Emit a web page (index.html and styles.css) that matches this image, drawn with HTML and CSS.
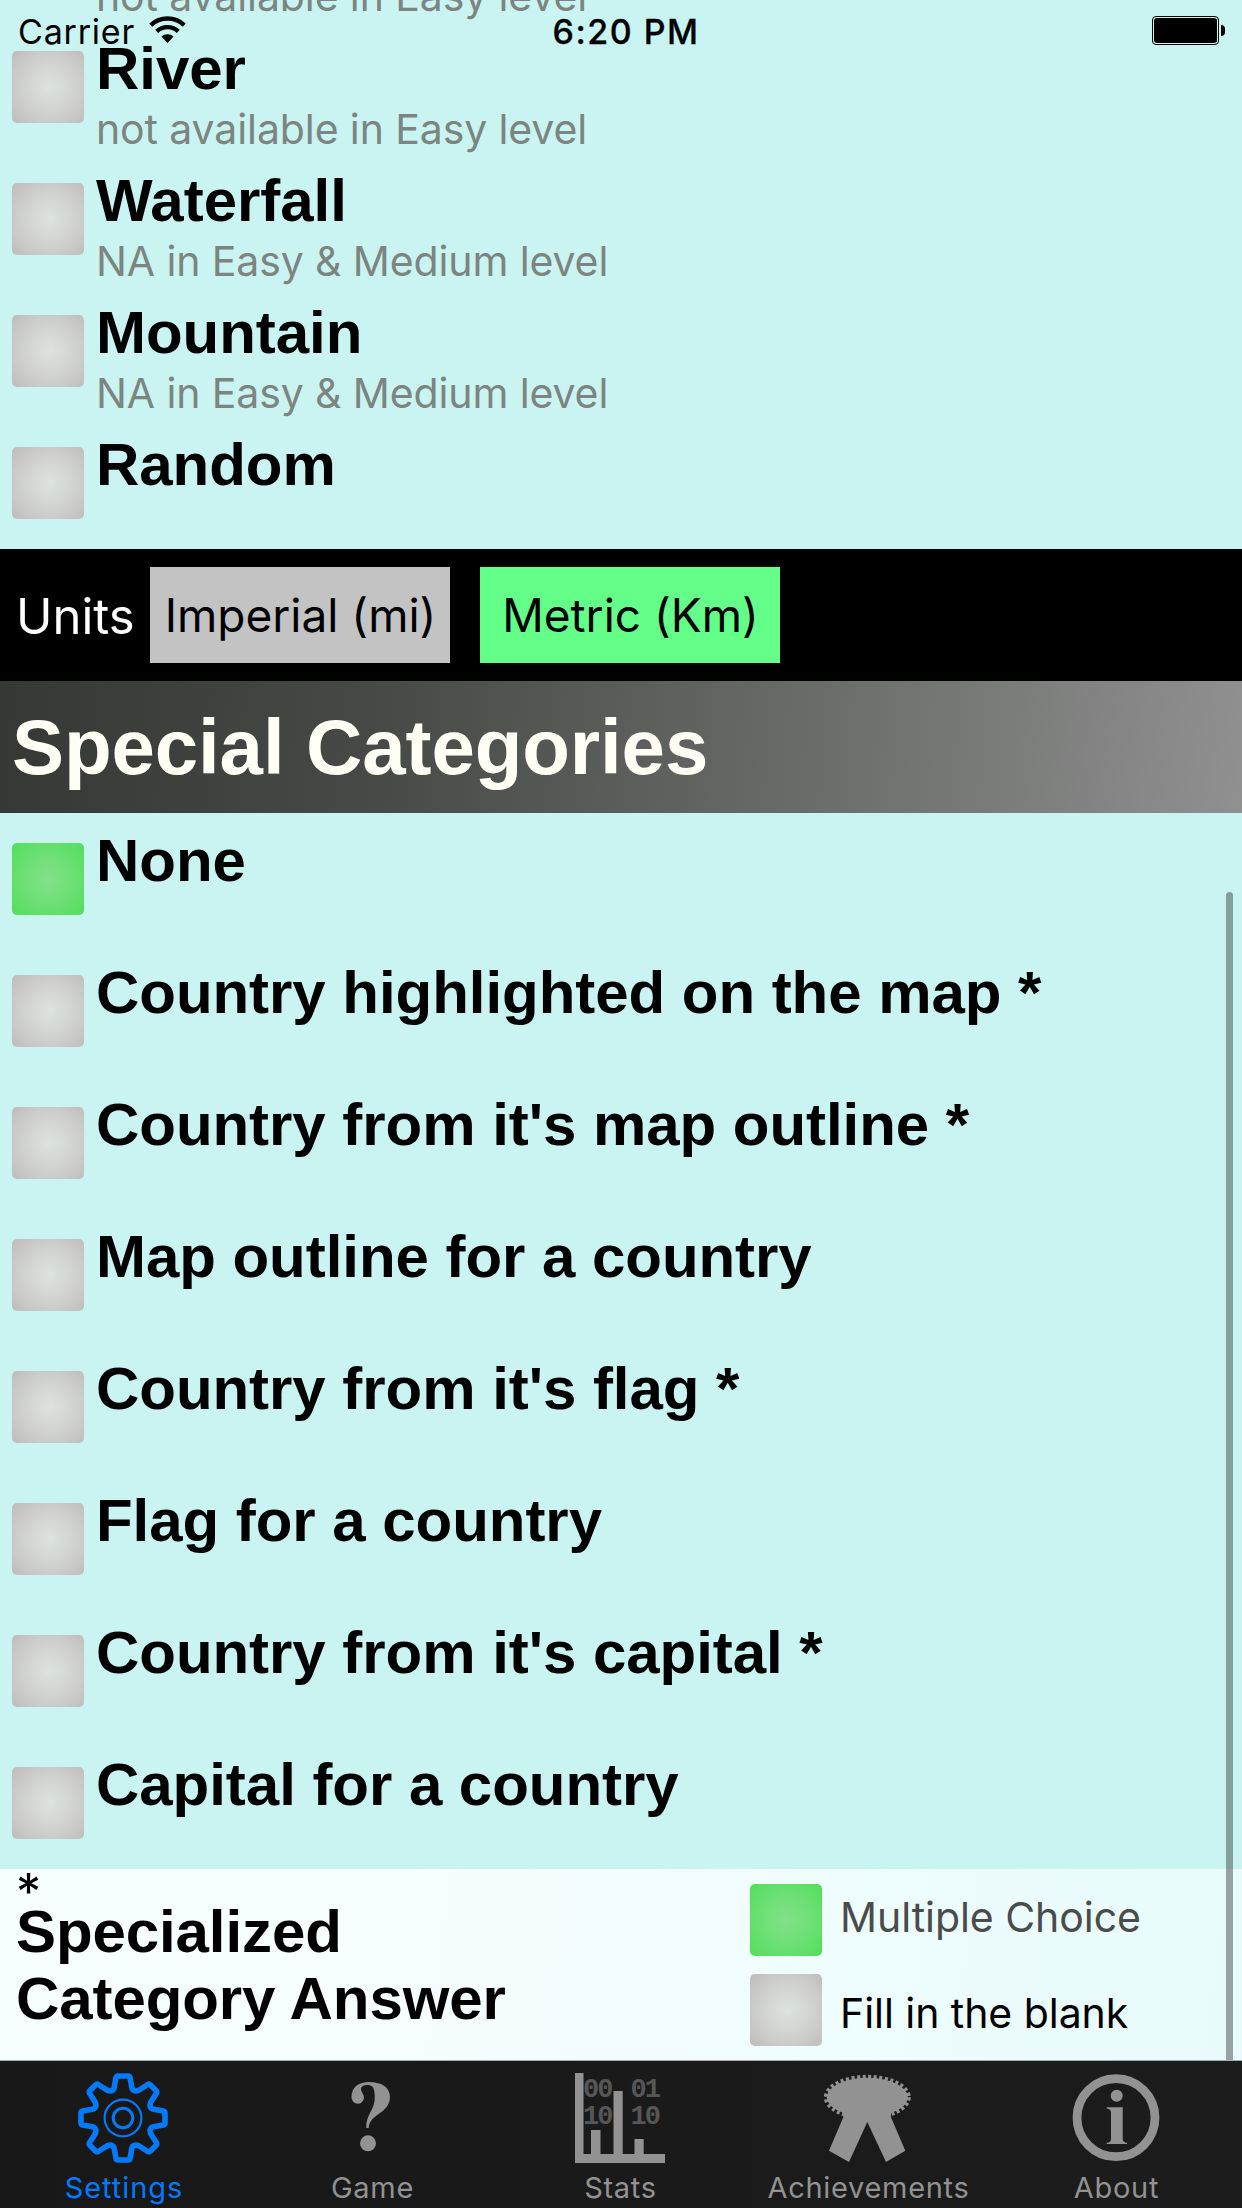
FILE: index.html
```html
<!DOCTYPE html>
<html lang="en">
<head>
<meta charset="utf-8">
<title>Settings</title>
<link rel="stylesheet" href="styles.css">
</head>
<body>
<div class="screen">
  <header class="status">
    <div class="status-left">
      <span>Carrier</span>
      <svg class="wifi" viewBox="0 0 37 27" width="37" height="27">
        <path d="M1.8 9.1A24.5 24.5 0 0 1 35.2 9.1M7.7 15.4A15.8 15.8 0 0 1 29.3 15.4" fill="none" stroke="#000" stroke-width="4.4"/>
        <path d="M18.5 27L12.4 20.6A9 9 0 0 1 24.6 20.6Z"/>
      </svg>
    </div>
    <span class="time">6:20 PM</span>
    <div class="battery"><div class="battery-body"><div class="battery-fill"></div></div><div class="battery-cap"></div></div>
  </header>

  <main class="content">
    <div class="row"><span class="box"></span><div class="text"><span class="title"></span><span class="sub">not available in Easy level</span></div></div>
    <div class="row"><span class="box"></span><div class="text"><span class="title">River</span><span class="sub">not available in Easy level</span></div></div>
    <div class="row"><span class="box"></span><div class="text"><span class="title">Waterfall</span><span class="sub">NA in Easy &amp; Medium level</span></div></div>
    <div class="row"><span class="box"></span><div class="text"><span class="title">Mountain</span><span class="sub">NA in Easy &amp; Medium level</span></div></div>
    <div class="row"><span class="box"></span><div class="text"><span class="title">Random</span></div></div>

    <div class="units">
      <span class="units-label">Units</span>
      <span class="unit">Imperial (mi)</span>
      <span class="unit unit-on">Metric (Km)</span>
    </div>

    <h2 class="section">Special Categories</h2>

    <div class="row"><span class="box box-on"></span><div class="text"><span class="title">None</span></div></div>
    <div class="row"><span class="box"></span><div class="text"><span class="title">Country highlighted on the map *</span></div></div>
    <div class="row"><span class="box"></span><div class="text"><span class="title">Country from it's map outline *</span></div></div>
    <div class="row"><span class="box"></span><div class="text"><span class="title">Map outline for a country</span></div></div>
    <div class="row"><span class="box"></span><div class="text"><span class="title">Country from it's flag *</span></div></div>
    <div class="row"><span class="box"></span><div class="text"><span class="title">Flag for a country</span></div></div>
    <div class="row"><span class="box"></span><div class="text"><span class="title">Country from it's capital *</span></div></div>
    <div class="row"><span class="box"></span><div class="text"><span class="title">Capital for a country</span></div></div>

    <div class="answer">
      <div class="answer-label">
        <span class="star">*</span>
        <span class="answer-title">Specialized<br>Category Answer</span>
      </div>
      <div class="options">
        <div class="option option-on"><span class="box box-on"></span><span>Multiple Choice</span></div>
        <div class="option"><span class="box"></span><span>Fill in the blank</span></div>
      </div>
    </div>
    <div class="scrollbar"></div>
  </main>

  <nav class="tabs">
    <div class="tab tab-on">
      <svg class="icon" viewBox="0 0 90 90">
        <defs><path id="q" d="M0-42H5Q6.6-42 7-40.5L8.8-30.5Q9.3-27.5 12.5-27Q15-27 17-28.5L24-33Q26-34.5 27.5-33L33-27.5Q34.5-26 33-24L28.5-17Q27-15 27-12.5Q27.5-9.3 30.5-8.8L40.5-7Q42-6.6 42-5V0"/></defs>
        <g transform="translate(44 45)" fill="none" stroke="currentColor" stroke-width="5.6" stroke-linejoin="round">
          <use href="#q"/><use href="#q" transform="rotate(90)"/><use href="#q" transform="rotate(180)"/><use href="#q" transform="rotate(270)"/>
          <circle r="18.4" stroke-width="2.2"/><circle r="9.8" stroke-width="3"/>
        </g>
      </svg>
      <span>Settings</span>
    </div>
    <div class="tab">
      <svg class="icon" viewBox="0 0 90 90" fill="currentColor">
        <path d="M24.5 24C24.5 14 32 9 42 9C54 9 63 14 63 24C63 34 55 38.5 49 43C44 47 42 50 41.7 55H39.3C39 47 42 42 45 36C48 30 48 25 47.5 20C47 14 45 12 40.5 12C37 12 34 13.5 34 16C34 19 37 21 37 25A6.2 6.2 0 0 1 24.5 24Z"/>
        <circle cx="41" cy="70.3" r="8"/>
      </svg>
      <span>Game</span>
    </div>
    <div class="tab">
      <svg class="icon" viewBox="0 0 90 90" fill="currentColor">
        <g class="digits"><text x="8" y="24">00</text><text x="55.5" y="24">01</text><text x="8" y="51">10</text><text x="55.5" y="51">10</text></g>
        <path d="M0 0H8.500V81H16V57H25.500V81H38.500V18H47.700V81H59.500V66H68.700V81H90V90H0Z"/>
      </svg>
      <span>Stats</span>
    </div>
    <div class="tab">
      <svg class="icon" viewBox="0 0 90 90" fill="currentColor">
        <ellipse cx="44.3" cy="24.3" rx="40.5" ry="19.5"/>
        <ellipse cx="44.3" cy="24.3" rx="41" ry="20" fill="none" stroke="currentColor" stroke-width="5" stroke-dasharray="3 2.5"/>
        <path d="M20.300 42L20.300 44.300L6 77.700L26 89L44.300 49L63 89L82.300 77.700L68 44.300V36H20.300Z"/>
      </svg>
      <span>Achievements</span>
    </div>
    <div class="tab">
      <svg class="icon" viewBox="0 0 90 90" fill="currentColor">
        <circle cx="45" cy="44.7" r="39" fill="none" stroke="currentColor" stroke-width="8.8"/>
        <circle cx="45.7" cy="22.7" r="6"/>
        <path d="M35.7 34.3H51.7V66Q52 69.5 56 69.8V71H35.7V69.8Q40 69.5 40 66V39.5Q40 36 35.7 35.5Z"/>
      </svg>
      <span>About</span>
    </div>
  </nav>
</div>
</body>
</html>
```
FILE: styles.css
```css
* { box-sizing: border-box; }

body {
  margin: 0;
  background: #c9f4f2;
  color: #000;
  font-family: Inter, "Liberation Sans", sans-serif;
}

.screen {
  position: relative;
  display: flex;
  flex-direction: column;
  width: 1242px;
  height: 2208px;
  overflow: hidden;
}

/* Status bar floats over the scrolled list */
.status {
  position: absolute;
  inset: 0 0 auto 0;
  z-index: 2;
  display: grid;
  grid-template-columns: 1fr auto 1fr;
  align-items: center;
  height: 63px;
  padding: 0 17px 0 18px;
  font-size: 34px;
  line-height: 63px;
}
.status-left { display: flex; align-items: center; gap: 14px; letter-spacing: 0.8px; }
.wifi { margin-top: -4px; }
.time { font-weight: 500; letter-spacing: 1.5px; padding-left: 9px; -webkit-text-stroke: 0.3px #000; }
.battery { display: flex; align-items: center; justify-content: flex-end; gap: 2px; margin-top: -2px; }
.battery-body { width: 67px; height: 29px; padding: 1px; border: 1px solid #000; border-radius: 4px; }
.battery-fill { height: 100%; background: #000; border-radius: 3px; }
.battery-cap { width: 4px; height: 11px; background: #000; border-radius: 0 4px 4px 0; }

.content {
  position: relative;
  display: flex;
  flex-direction: column;
  justify-content: flex-end;
  flex: none;
  height: 2060px;
  overflow: hidden;
}

.row { display: flex; flex: none; gap: 12px; height: 132px; padding-left: 12px; }
.row .box { margin-top: 30px; }

.box {
  flex: none;
  width: 72px;
  height: 72px;
  border-radius: 5px;
  background: radial-gradient(circle 54px at 52% 50%, #dde3df, #d0d1cf 50%, #bdbab9);
}
.box-on { background: radial-gradient(circle 50px at 50% 50%, #84e08a, #6de075 50%, #53de5d); }

.text { display: flex; flex-direction: column; padding-top: 15px; }
.title {
  height: 66px;
  font: bold 60px/66px "Liberation Sans", sans-serif;
  letter-spacing: -0.04px;
  white-space: nowrap;
}
.sub {
  margin-top: 2px;
  font-size: 41px;
  line-height: 50px;
  letter-spacing: -0.11px;
  color: #7c857f;
  white-space: nowrap;
}

.units {
  display: flex;
  flex: none;
  align-items: center;
  gap: 30px;
  height: 132px;
  padding-left: 16px;
  background: #000;
}
.units-label { width: 104px; padding-top: 2px; color: #fff; font-size: 49px; white-space: nowrap; }
.unit {
  width: 300px;
  height: 96px;
  padding-left: 1px;
  background: #c3c3c3;
  font-size: 46px;
  line-height: 96px;
  text-align: center;
}
.unit-on { background: #63ff88; }

.section {
  flex: none;
  height: 132px;
  margin: 0;
  padding-left: 12px;
  background: linear-gradient(94deg, #363836, #474947 30%, #6b6d6b 66%, #8f908f);
  color: #fffff5;
  font: bold 78px/132px "Liberation Sans", sans-serif;
  letter-spacing: -0.1px;
}

.answer {
  display: flex;
  flex: none;
  justify-content: space-between;
  height: 191px;
  padding: 0 100px 0 16px;
  background: linear-gradient(98deg, #f7fffe 25%, #f3fcfe 50%, #eefdfd 70%, #e8fafa);
}
.answer-label { display: flex; flex-direction: column; padding-top: 7px; }
.star { margin-bottom: -7px; font-size: 50px; line-height: 33px; height: 29px; }
.answer-title { font: bold 60px/67px "Liberation Sans", sans-serif; letter-spacing: -0.1px; }
.options { display: flex; flex-direction: column; flex: none; gap: 18px; width: 392px; padding-top: 15px; margin-left: auto; font-size: 41px; }
.option { display: flex; align-items: center; gap: 18px; height: 72px; letter-spacing: -0.05px; white-space: nowrap; }
.option span + span { padding-top: 5px; }
.option-on { color: #4a4b4b; }
.option-on span + span { padding: 0 0 6px; }

.scrollbar {
  position: absolute;
  top: 892px;
  right: 9px;
  bottom: -4px;
  width: 7px;
  border-radius: 4px;
  background: rgba(0, 0, 0, 0.35);
}

.tabs {
  display: grid;
  grid-template-columns: repeat(5, 248px);
  height: 148px;
  border-top: 1px solid #a3adac;
  background: linear-gradient(90deg, #181818, #1c1c1c);
  color: #929292;
}
.tab {
  display: flex;
  flex-direction: column;
  align-items: center;
  gap: 7px;
  padding-top: 12px;
  font-size: 29px;
  line-height: 35px;
  letter-spacing: 0.7px;
}
.tab span { padding-left: 1px; }
.tab-on { color: #007aff; letter-spacing: 0.95px; }
.tab-on span { padding: 0; }
.icon { width: 90px; height: 90px; overflow: visible; }
.digits { font: bold 27px "Liberation Mono", monospace; letter-spacing: -2px; opacity: 0.5; }
```
